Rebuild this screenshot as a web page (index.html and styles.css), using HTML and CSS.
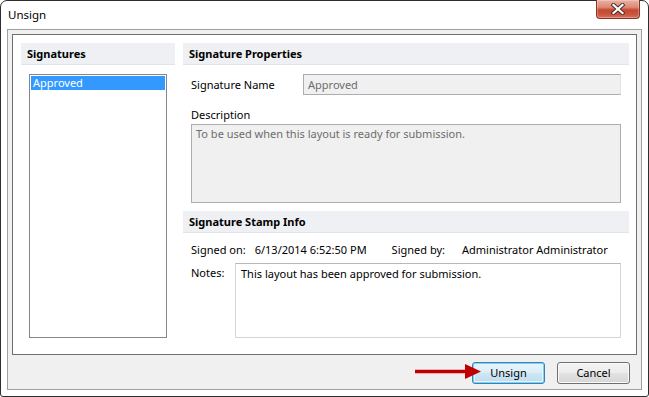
FILE: index.html
```html
<!DOCTYPE html>
<html>
<head>
<meta charset="utf-8">
<link rel="stylesheet" href="styles.css">
</head>
<body>
<div class="window">
  <div class="titlebar">
    <span class="title">Unsign</span>
    <div class="close">
      <svg width="20" height="12" viewBox="0 0 20 12">
        <path d="M5.5 2 L14.5 10 M14.5 2 L5.5 10" stroke="#4a2a24" stroke-width="4" stroke-linecap="square" fill="none"/>
        <path d="M5.5 2 L14.5 10 M14.5 2 L5.5 10" stroke="#ffffff" stroke-width="2.2" stroke-linecap="square" fill="none"/>
      </svg>
    </div>
  </div>
  <div class="frame">
    <div class="panel">
      <div class="leftcol">
        <div class="hdr">Signatures</div>
        <div class="list">
          <div class="item sel">Approved</div>
        </div>
      </div>
      <div class="rightcol">
        <div class="hdr">Signature Properties</div>
        <div class="row namerow">
          <span class="lbl namelbl">Signature Name</span>
          <div class="field ro nameinput">Approved</div>
        </div>
        <div class="lbl desclbl">Description</div>
        <div class="field ro desc">To be used when this layout is ready for submission.</div>
        <div class="hdr stamphdr">Signature Stamp Info</div>
        <div class="row signrow">
          <span class="lbl son">Signed on:</span>
          <span class="val sdate">6/13/2014 6:52:50 PM</span>
          <span class="lbl sby">Signed by:</span>
          <span class="val sname">Administrator Administrator</span>
        </div>
        <div class="row notesrow">
          <span class="lbl noteslbl">Notes:</span>
          <div class="field notes">This layout has been approved for submission.</div>
        </div>
      </div>
    </div>
    <div class="buttons">
      <svg class="arrow" width="70" height="18" viewBox="0 0 70 18">
        <path d="M1 8.5 L54 8.5" stroke="#c00000" stroke-width="3.4" fill="none"/>
        <path d="M51 1 L67 8.5 L51 16 Z" fill="#c00000"/>
      </svg>
      <div class="btn default">Unsign</div>
      <div class="btn">Cancel</div>
    </div>
  </div>
</div>
</body>
</html>
```
FILE: styles.css
```css
html, body {
  margin: 0;
  padding: 0;
  background: #ffffff;
}
body {
  width: 649px;
  height: 397px;
  overflow: hidden;
  font-family: "Noto Sans", "Open Sans", sans-serif;
  font-size: 11px;
  color: #000;
}
.window {
  box-sizing: border-box;
  width: 649px;
  height: 397px;
  border: 1px solid #2e2e2e;
  border-radius: 7px 7px 3px 3px;
  background: #ffffff;
  display: flex;
  flex-direction: column;
}
.titlebar {
  height: 28px;
  flex-shrink: 0;
  display: flex;
  align-items: flex-start;
  justify-content: space-between;
}
.title {
  margin-left: 7px;
  margin-top: 6px;
  font-size: 11.5px;
  line-height: 16px;
}
.close {
  box-sizing: border-box;
  width: 44px;
  height: 19px;
  margin-right: 8px;
  margin-top: -1px;
  border: 1px solid #83372a;
  border-top: none;
  border-radius: 0 0 4px 4px;
  background: linear-gradient(#eab1a3 0%, #dd8a76 40%, #c44a32 55%, #c9553c 80%, #d97560 100%);
  display: flex;
  align-items: center;
  justify-content: center;
  box-shadow: inset 0 0 0 1px rgba(255,255,255,0.25);
}
.close svg { display: block; }
.frame {
  box-sizing: border-box;
  margin: 0 6px 6px 6px;
  height: 361px;
  flex-shrink: 0;
  border: 1px solid #a0a0a0;
  background: #f0f0f0;
  padding: 4px 4px 0 4px;
  display: flex;
  flex-direction: column;
}
.panel {
  box-sizing: border-box;
  height: 321px;
  flex-shrink: 0;
  border: 1px solid #6e6e6e;
  background: #ffffff;
  padding: 8px 7px 8px 8px;
  display: flex;
  gap: 8px;
}
.leftcol {
  width: 154px;
  flex-shrink: 0;
  display: flex;
  flex-direction: column;
}
.rightcol {
  flex: 1;
  min-width: 0;
  display: flex;
  flex-direction: column;
}
.hdr {
  box-sizing: border-box;
  height: 22px;
  flex-shrink: 0;
  background: #eef0f4;
  border-bottom: 1px solid #e0e3e9;
  font-weight: bold;
  padding-left: 6px;
  line-height: 21px;
}
.list {
  box-sizing: border-box;
  margin: 9px 0 0 8px;
  width: 138px;
  height: 264px;
  border: 1px solid #82878f;
  padding: 1px;
}
.item {
  height: 14px;
  line-height: 14px;
  padding-left: 2px;
}
.item.sel {
  background: #3399ff;
  color: #ffffff;
}
.row {
  display: flex;
}
.lbl, .val {
  white-space: nowrap;
}
.namerow {
  margin-top: 9px;
  margin-left: 8px;
  align-items: center;
}
.namelbl {
  width: 112px;
  flex-shrink: 0;
}
.field {
  box-sizing: border-box;
  border: 1px solid #abadb3;
  padding-left: 4px;
  white-space: nowrap;
  flex-shrink: 0;
}
.ro {
  background: #f0f0f0;
  color: #6d6d6d;
}
.nameinput {
  width: 318px;
  height: 21px;
  line-height: 19px;
  border-right-color: #e3e3e3;
}
.desclbl {
  margin: 12px 0 0 8px;
  line-height: 16px;
}
.desc {
  margin: 1px 0 0 8px;
  width: 430px;
  height: 79px;
  padding-top: 1px;
  line-height: 16px;
}
.stamphdr {
  margin-top: 8px;
}
.signrow {
  margin: 9px 0 0 8px;
  line-height: 16px;
}
.sdate {
  margin-left: 9px;
}
.sby {
  margin-left: 25px;
}
.sname {
  margin-left: 17px;
}
.notesrow {
  margin: 5px 0 0 8px;
  align-items: flex-start;
}
.noteslbl {
  width: 44px;
  flex-shrink: 0;
  margin-top: 2px;
}
.notes {
  width: 386px;
  height: 75px;
  background: #ffffff;
  border-color: #d6d6d6;
  border-top-color: #b8b8b8;
  padding-left: 5px;
  padding-top: 2px;
  line-height: 16px;
}
.buttons {
  position: relative;
  flex: 1;
  display: flex;
  justify-content: flex-end;
  align-items: flex-start;
  gap: 12px;
  padding: 7px 7px 0 0;
}
.arrow {
  position: absolute;
  left: 402px;
  top: 8px;
  z-index: 2;
}
.btn {
  box-sizing: border-box;
  width: 73px;
  height: 22px;
  border: 1px solid #707070;
  border-radius: 3px;
  background: linear-gradient(#f4f4f4 0%, #ececec 48%, #e2e2e2 52%, #d6d6d6 100%);
  text-align: center;
  line-height: 20px;
  box-shadow: inset 0 0 0 1px #fbfbfb;
}
.btn.default {
  border-color: #3c7fb1;
  background: linear-gradient(#e8f5fc 0%, #dcedf7 48%, #cde6f4 52%, #bedcef 100%);
  box-shadow: inset 0 0 0 1px #7ed2f6, inset 0 0 0 2px #e4f4fc;
}
```
